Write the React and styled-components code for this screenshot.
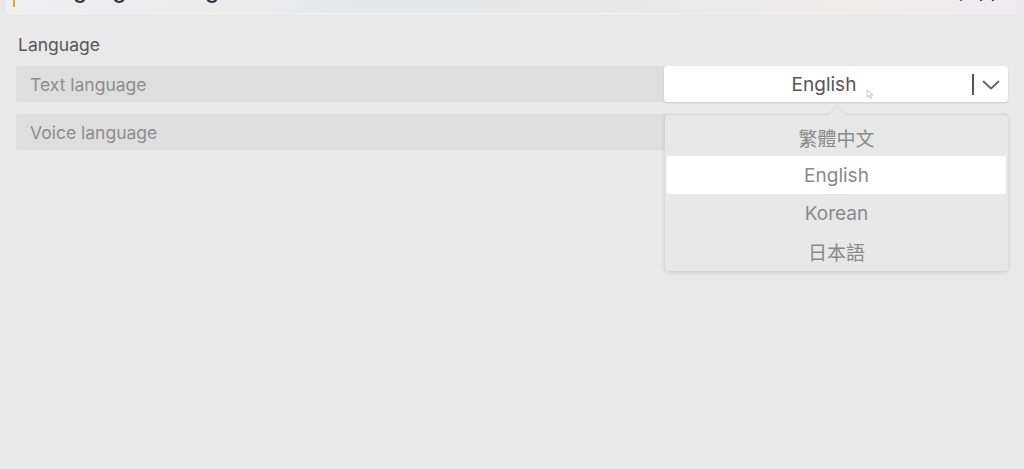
import styled, { createGlobalStyle } from 'styled-components'

const GlobalStyle = createGlobalStyle`
  html, body {
    margin: 0;
    padding: 0;
    background: #e9e9e9;
    font-family: Inter, "Noto Sans", "Noto Sans CJK TC", sans-serif;
    overflow: hidden;
  }
`

const languages = ['繁體中文', 'English', 'Korean', '日本語']

export default function App() {
  const selected = 'English'
  return (
    <Page>
      <GlobalStyle />
      <Header>
        <Accent />
        <HeaderTitle>Language Settings</HeaderTitle>
        <HeaderIcons>
          <HelpIcon>?</HelpIcon>
          <svg width="18" height="18" viewBox="0 0 18 18">
            <path d="M3 3 L15 15 M15 3 L3 15" stroke="#333" strokeWidth="2.2" strokeLinecap="round" />
          </svg>
        </HeaderIcons>
      </Header>

      <Section>
        <SectionTitle>Language</SectionTitle>
        <Row>
          <RowLabel>Text language</RowLabel>
          <SelectWrap>
            <Select>
              <SelectValue>
                English
                <Cursor>
                  <svg width="8" height="10" viewBox="0 0 8 10">
                    <path d="M1 1 L1 8 L3 6.5 L4.5 9.5 L5.5 9 L4.2 6 L6.8 6 Z" fill="#fff" stroke="#aaa" strokeWidth="0.8" />
                  </svg>
                </Cursor>
              </SelectValue>
              <Divider />
              <Chevron>
                <svg width="18" height="10" viewBox="0 0 18 10">
                  <path d="M1.5 1.5 L9 8.5 L16.5 1.5" fill="none" stroke="#666" strokeWidth="1.8" strokeLinecap="round" strokeLinejoin="round" />
                </svg>
              </Chevron>
            </Select>
            <Menu>
              <Caret />
              {languages.map(lang => (
                <Option key={lang} $active={lang === selected}>{lang}</Option>
              ))}
            </Menu>
          </SelectWrap>
        </Row>
        <Row>
          <RowLabel>Voice language</RowLabel>
        </Row>
      </Section>
    </Page>
  )
}

const Page = styled.div`
  width: 1024px;
  height: 469px;
  background: #e9e9e9;
  overflow: hidden;
`

const Header = styled.div`
  margin: -29px 8px 0 6px;
  height: 42px;
  box-sizing: border-box;
  display: flex;
  align-items: center;
  padding: 0 20px 0 7px;
  border-radius: 0 0 4px 4px;
  background: linear-gradient(90deg, #efeef0 0%, #ecebec 25%, #e3e6ec 35%, #e6e6e6 50%, #eaeaea 70%, #f0ecec 85%, #efebef 100%);
  box-shadow: 0 1px 0 #f2f2f2;
`

const Accent = styled.div`
  width: 2px;
  height: 30px;
  background: #f3a31b;
  margin-right: 20px;
  align-self: flex-end;
  margin-bottom: 6px;
`

const HeaderTitle = styled.div`
  flex: 1;
  font-size: 22px;
  font-weight: 500;
  color: #333;
  margin-top: -4px;
`

const HeaderIcons = styled.div`
  display: flex;
  align-items: center;
  gap: 12px;
  margin-top: 4px;
`

const HelpIcon = styled.span`
  font-size: 18px;
  color: #555;
`

const Section = styled.div`
  padding: 21px 16px 0 16px;
  display: flex;
  flex-direction: column;
  gap: 12px;
`

const SectionTitle = styled.div`
  font-size: 17.5px;
  color: #585858;
  padding-left: 2px;
  margin-bottom: -1px;
`

const Row = styled.div`
  height: 36px;
  background: #dedede;
  border-radius: 3px;
  display: flex;
  align-items: center;
  justify-content: space-between;
`

const RowLabel = styled.div`
  padding-left: 14px;
  font-size: 17.5px;
  color: #8d8d8d;
`

const SelectWrap = styled.div`
  position: relative;
  width: 344px;
  height: 36px;
`

const Select = styled.div`
  height: 100%;
  background: #fff;
  border-radius: 3px;
  box-shadow: 0 1px 2px rgba(0, 0, 0, 0.12);
  display: flex;
  align-items: center;
`

const SelectValue = styled.div`
  flex: 1;
  text-align: center;
  font-size: 19px;
  color: #555;
  padding-left: 12px;
  position: relative;
`

const Cursor = styled.span`
  position: absolute;
  margin-left: 10px;
  margin-top: 8px;
  opacity: 0.8;
`

const Divider = styled.div`
  width: 2px;
  height: 21px;
  background: #555;
`

const Chevron = styled.div`
  width: 34px;
  display: flex;
  justify-content: center;
  align-items: center;
  padding-top: 1px;
`

const Menu = styled.div`
  position: absolute;
  top: 49px;
  left: 1px;
  right: 0;
  background: #e8e8e8;
  border-radius: 4px;
  box-shadow: 0 1px 4px rgba(0, 0, 0, 0.15);
  padding: 3px 2px 1px;
  z-index: 2;
`

const Caret = styled.div`
  position: absolute;
  top: -6px;
  left: 166px;
  width: 12px;
  height: 12px;
  background: #e8e8e8;
  transform: rotate(45deg);
  box-shadow: -1px -1px 2px rgba(0, 0, 0, 0.06);
`

const Option = styled.div`
  position: relative;
  height: 38px;
  display: flex;
  align-items: center;
  justify-content: center;
  font-size: 19px;
  color: #8a8a8a;
  background: ${({ $active }) => ($active ? '#fff' : 'transparent')};
  border-radius: 2px;
`
